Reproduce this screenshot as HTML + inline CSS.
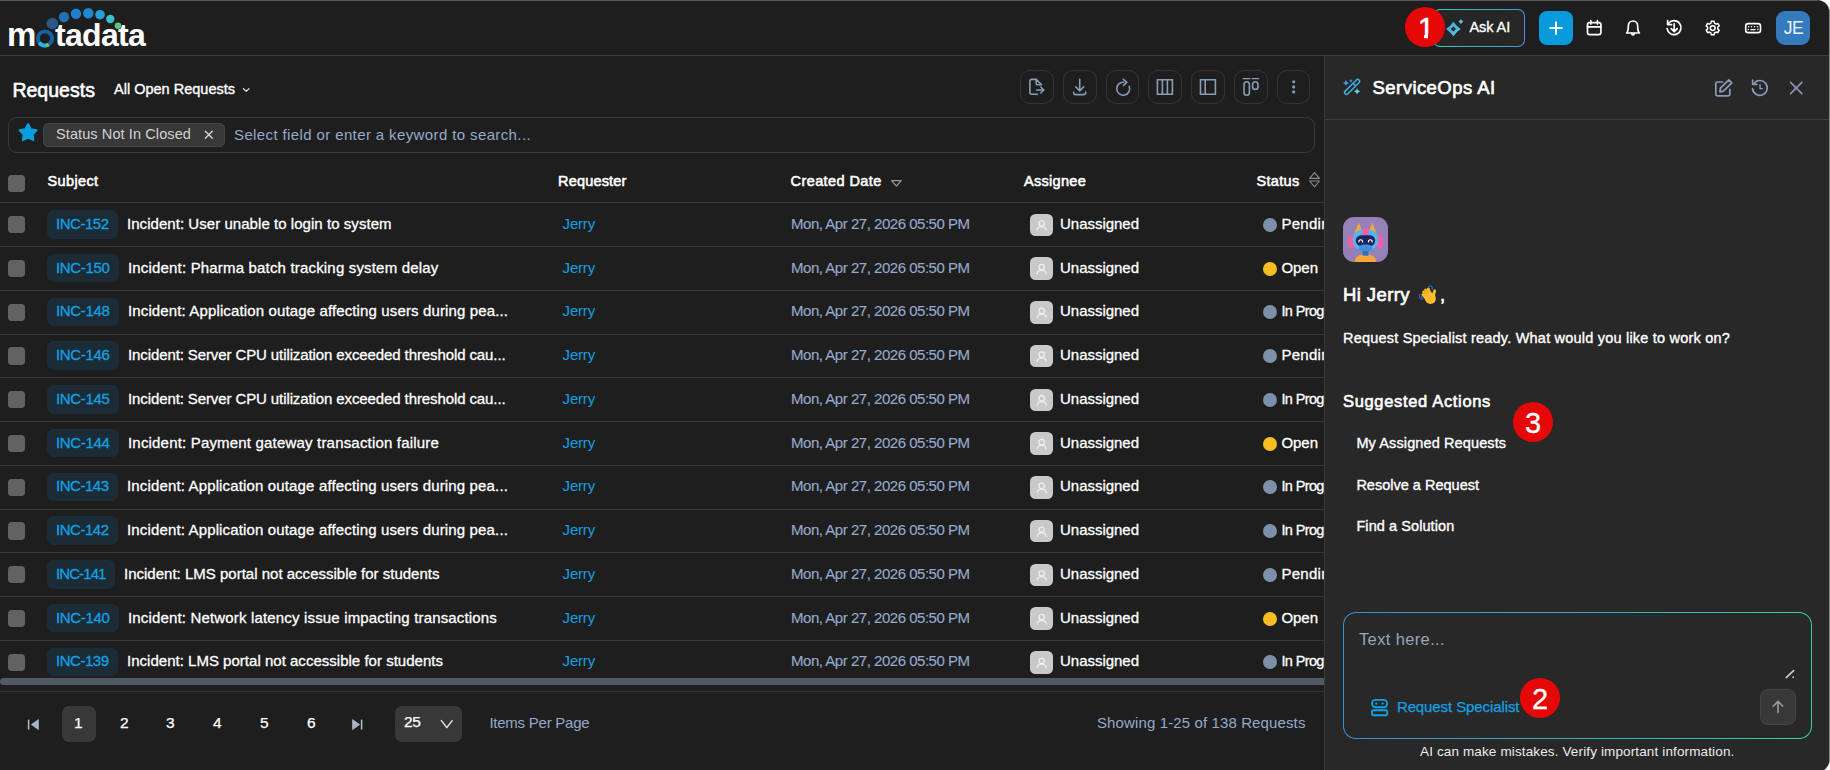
<!DOCTYPE html>
<html lang="en">
<head>
<meta charset="utf-8">
<title>Requests - ServiceOps</title>
<style>
html,body{margin:0;padding:0;background:#fff;}
body{width:1830px;height:770px;overflow:hidden;font-family:"Liberation Sans",sans-serif;}
#frame{position:absolute;left:0;top:0;width:1830px;height:771.5px;background:#8a8a8a;border-radius:0 12.5px 12.5px 0;overflow:hidden;}
#app{position:absolute;left:0;top:0;width:1829px;height:771.5px;background:#1e1e1e;overflow:hidden;border-radius:0 12px 12px 0;}
.b{position:absolute;box-sizing:border-box;}
.t{position:absolute;white-space:pre;line-height:20px;color:#fff;font-family:"Liberation Sans",sans-serif;}
.ann{z-index:30;}
svg{position:absolute;overflow:visible;}
.ic{fill:none;stroke:#fff;stroke-width:1.6;stroke-linecap:round;stroke-linejoin:round;}
.tb{fill:none;stroke:#8a9bb8;stroke-width:1.6;stroke-linecap:round;stroke-linejoin:round;}
#tablewrap{position:absolute;left:0;top:0;width:1324px;height:770px;overflow:hidden;}
</style>
</head>
<body>
<div id="frame">
<div id="app">
<!-- top edge line -->
<div class="b" style="left:0;top:0;width:1818px;height:1px;background:#575757"></div>
<!-- header bottom border -->
<div class="b" style="left:0;top:55px;width:1829px;height:1px;background:#3a3a3a"></div>

<!-- right panel background -->
<div class="b" style="left:1324px;top:56px;width:505px;height:716px;background:#282828"></div>
<div class="b" style="left:1324px;top:56px;width:1px;height:716px;background:#393939"></div>
<div class="b" style="left:1325px;top:119px;width:504px;height:1px;background:#3e3e3e"></div>

<div id="tablewrap">
<div class="b" style="left:8.2px;top:174.5px;width:17.3px;height:17.3px;background:#626262;border-radius:3.8px"></div>
<div class="b" style="left:0px;top:202px;width:1324px;height:1px;background:#383838"></div>
<div class="b" style="left:8.2px;top:216.2px;width:17.3px;height:17.3px;background:#626262;border-radius:3.8px"></div>
<div class="b" style="left:47px;top:210.0px;width:71px;height:28.6px;background:#1b2c36;border-radius:6.5px"></div>
<div class="b" style="left:1030px;top:213.7px;width:23px;height:22.5px;background:#c9c9c9;border-radius:5.5px"></div>
<div class="b" style="left:1262.8px;top:217.79999999999998px;width:14.2px;height:14.2px;background:#7d8fa9;border-radius:50%"></div>
<div class="b" style="left:0px;top:246.0px;width:1324px;height:1px;background:#383838"></div>
<div class="b" style="left:8.2px;top:259.95px;width:17.3px;height:17.3px;background:#626262;border-radius:3.8px"></div>
<div class="b" style="left:47px;top:253.75px;width:72px;height:28.6px;background:#1b2c36;border-radius:6.5px"></div>
<div class="b" style="left:1030px;top:257.45px;width:23px;height:22.5px;background:#c9c9c9;border-radius:5.5px"></div>
<div class="b" style="left:1262.8px;top:261.55px;width:14.2px;height:14.2px;background:#f5bd1f;border-radius:50%"></div>
<div class="b" style="left:0px;top:289.5px;width:1324px;height:1px;background:#383838"></div>
<div class="b" style="left:8.2px;top:303.70000000000005px;width:17.3px;height:17.3px;background:#626262;border-radius:3.8px"></div>
<div class="b" style="left:47px;top:297.5px;width:72px;height:28.6px;background:#1b2c36;border-radius:6.5px"></div>
<div class="b" style="left:1030px;top:301.20000000000005px;width:23px;height:22.5px;background:#c9c9c9;border-radius:5.5px"></div>
<div class="b" style="left:1262.8px;top:305.3px;width:14.2px;height:14.2px;background:#7d8fa9;border-radius:50%"></div>
<div class="b" style="left:0px;top:333.5px;width:1324px;height:1px;background:#383838"></div>
<div class="b" style="left:8.2px;top:347.45000000000005px;width:17.3px;height:17.3px;background:#626262;border-radius:3.8px"></div>
<div class="b" style="left:47px;top:341.25px;width:72px;height:28.6px;background:#1b2c36;border-radius:6.5px"></div>
<div class="b" style="left:1030px;top:344.95000000000005px;width:23px;height:22.5px;background:#c9c9c9;border-radius:5.5px"></div>
<div class="b" style="left:1262.8px;top:349.05px;width:14.2px;height:14.2px;background:#7d8fa9;border-radius:50%"></div>
<div class="b" style="left:0px;top:377.0px;width:1324px;height:1px;background:#383838"></div>
<div class="b" style="left:8.2px;top:391.20000000000005px;width:17.3px;height:17.3px;background:#626262;border-radius:3.8px"></div>
<div class="b" style="left:47px;top:385.0px;width:72px;height:28.6px;background:#1b2c36;border-radius:6.5px"></div>
<div class="b" style="left:1030px;top:388.70000000000005px;width:23px;height:22.5px;background:#c9c9c9;border-radius:5.5px"></div>
<div class="b" style="left:1262.8px;top:392.8px;width:14.2px;height:14.2px;background:#7d8fa9;border-radius:50%"></div>
<div class="b" style="left:0px;top:421.0px;width:1324px;height:1px;background:#383838"></div>
<div class="b" style="left:8.2px;top:434.95000000000005px;width:17.3px;height:17.3px;background:#626262;border-radius:3.8px"></div>
<div class="b" style="left:47px;top:428.75px;width:72px;height:28.6px;background:#1b2c36;border-radius:6.5px"></div>
<div class="b" style="left:1030px;top:432.45000000000005px;width:23px;height:22.5px;background:#c9c9c9;border-radius:5.5px"></div>
<div class="b" style="left:1262.8px;top:436.55px;width:14.2px;height:14.2px;background:#f5bd1f;border-radius:50%"></div>
<div class="b" style="left:0px;top:464.5px;width:1324px;height:1px;background:#383838"></div>
<div class="b" style="left:8.2px;top:478.70000000000005px;width:17.3px;height:17.3px;background:#626262;border-radius:3.8px"></div>
<div class="b" style="left:47px;top:472.5px;width:71px;height:28.6px;background:#1b2c36;border-radius:6.5px"></div>
<div class="b" style="left:1030px;top:476.20000000000005px;width:23px;height:22.5px;background:#c9c9c9;border-radius:5.5px"></div>
<div class="b" style="left:1262.8px;top:480.3px;width:14.2px;height:14.2px;background:#7d8fa9;border-radius:50%"></div>
<div class="b" style="left:0px;top:508.5px;width:1324px;height:1px;background:#383838"></div>
<div class="b" style="left:8.2px;top:522.45px;width:17.3px;height:17.3px;background:#626262;border-radius:3.8px"></div>
<div class="b" style="left:47px;top:516.25px;width:71px;height:28.6px;background:#1b2c36;border-radius:6.5px"></div>
<div class="b" style="left:1030px;top:519.95px;width:23px;height:22.5px;background:#c9c9c9;border-radius:5.5px"></div>
<div class="b" style="left:1262.8px;top:524.0500000000001px;width:14.2px;height:14.2px;background:#7d8fa9;border-radius:50%"></div>
<div class="b" style="left:0px;top:552.0px;width:1324px;height:1px;background:#383838"></div>
<div class="b" style="left:8.2px;top:566.2px;width:17.3px;height:17.3px;background:#626262;border-radius:3.8px"></div>
<div class="b" style="left:47px;top:560.0px;width:68px;height:28.6px;background:#1b2c36;border-radius:6.5px"></div>
<div class="b" style="left:1030px;top:563.7px;width:23px;height:22.5px;background:#c9c9c9;border-radius:5.5px"></div>
<div class="b" style="left:1262.8px;top:567.8000000000001px;width:14.2px;height:14.2px;background:#7d8fa9;border-radius:50%"></div>
<div class="b" style="left:0px;top:596.0px;width:1324px;height:1px;background:#383838"></div>
<div class="b" style="left:8.2px;top:609.95px;width:17.3px;height:17.3px;background:#626262;border-radius:3.8px"></div>
<div class="b" style="left:47px;top:603.75px;width:72px;height:28.6px;background:#1b2c36;border-radius:6.5px"></div>
<div class="b" style="left:1030px;top:607.45px;width:23px;height:22.5px;background:#c9c9c9;border-radius:5.5px"></div>
<div class="b" style="left:1262.8px;top:611.5500000000001px;width:14.2px;height:14.2px;background:#f5bd1f;border-radius:50%"></div>
<div class="b" style="left:0px;top:639.5px;width:1324px;height:1px;background:#383838"></div>
<div class="b" style="left:8.2px;top:653.7px;width:17.3px;height:17.3px;background:#626262;border-radius:3.8px"></div>
<div class="b" style="left:47px;top:647.5px;width:71px;height:28.6px;background:#1b2c36;border-radius:6.5px"></div>
<div class="b" style="left:1030px;top:651.2px;width:23px;height:22.5px;background:#c9c9c9;border-radius:5.5px"></div>
<div class="b" style="left:1262.8px;top:655.3000000000001px;width:14.2px;height:14.2px;background:#7d8fa9;border-radius:50%"></div>
<span class="t" style="left:1281.4px;top:213.7px;font-size:15px;-webkit-text-stroke:0.3px #fff;letter-spacing:0.3px;">Pending</span>
<span class="t" style="left:1281.4px;top:257.5px;font-size:15px;letter-spacing:-0.026px;-webkit-text-stroke:0.3px #fff;">Open</span>
<span class="t" style="left:1281.4px;top:301.4px;font-size:14.5px;-webkit-text-stroke:0.3px #fff;letter-spacing:-0.62px;">In Progress</span>
<span class="t" style="left:1281.4px;top:345.0px;font-size:15px;-webkit-text-stroke:0.3px #fff;letter-spacing:0.3px;">Pending</span>
<span class="t" style="left:1281.4px;top:388.9px;font-size:14.5px;-webkit-text-stroke:0.3px #fff;letter-spacing:-0.62px;">In Progress</span>
<span class="t" style="left:1281.4px;top:432.5px;font-size:15px;letter-spacing:-0.026px;-webkit-text-stroke:0.3px #fff;">Open</span>
<span class="t" style="left:1281.4px;top:476.4px;font-size:14.5px;-webkit-text-stroke:0.3px #fff;letter-spacing:-0.62px;">In Progress</span>
<span class="t" style="left:1281.4px;top:520.1px;font-size:14.5px;-webkit-text-stroke:0.3px #fff;letter-spacing:-0.62px;">In Progress</span>
<span class="t" style="left:1281.4px;top:563.7px;font-size:15px;-webkit-text-stroke:0.3px #fff;letter-spacing:0.3px;">Pending</span>
<span class="t" style="left:1281.4px;top:607.5px;font-size:15px;letter-spacing:-0.026px;-webkit-text-stroke:0.3px #fff;">Open</span>
<span class="t" style="left:1281.4px;top:651.4px;font-size:14.5px;-webkit-text-stroke:0.3px #fff;letter-spacing:-0.62px;">In Progress</span>
<!-- search bar -->
<div class="b" style="left:8px;top:117px;width:1307px;height:36px;border:1px solid #3a3a3a;border-radius:9px"></div>
<div class="b" style="left:43px;top:123px;width:182px;height:24px;background:#383838;border:1px solid #444;border-radius:5px"></div>
<!-- scrollbar -->
<div class="b" style="left:0;top:678px;width:1324px;height:7px;background:#515964;border-radius:4px 0 0 4px"></div>
<div class="b" style="left:0;top:691px;width:1324px;height:1px;background:#363636"></div>
<!-- pagination boxes -->
<div class="b" style="left:62px;top:706px;width:34px;height:35.6px;background:#383838;border-radius:7px"></div>
<div class="b" style="left:395px;top:706px;width:67px;height:35.6px;background:#383838;border-radius:7px"></div>
</div>

<!-- toolbar buttons -->
<div class="b" style="left:1019.9px;top:69.9px;width:33.7px;height:34px;border:1px solid #353535;border-radius:10px"></div>
<div class="b" style="left:1062.9px;top:69.9px;width:33.7px;height:34px;border:1px solid #353535;border-radius:10px"></div>
<div class="b" style="left:1105.9px;top:69.9px;width:33.2px;height:34px;border:1px solid #353535;border-radius:10px"></div>
<div class="b" style="left:1147.9px;top:69.9px;width:33.9px;height:34px;border:1px solid #353535;border-radius:10px"></div>
<div class="b" style="left:1191px;top:69.9px;width:34px;height:34px;border:1px solid #353535;border-radius:10px"></div>
<div class="b" style="left:1233.8px;top:69.9px;width:34.1px;height:34px;border:1px solid #353535;border-radius:10px"></div>
<div class="b" style="left:1277px;top:69.9px;width:32.6px;height:34px;border:1px solid #353535;border-radius:10px"></div>

<!-- ask ai button -->
<div class="b" style="left:1433px;top:9px;width:92px;height:37.6px;border-radius:7px;background:linear-gradient(90deg,#2dd4b0,#4a90d9);"></div>
<div class="b" style="left:1434px;top:10px;width:90px;height:35.6px;border-radius:6px;background:#262626;"></div>
<!-- plus -->
<div class="b" style="left:1539px;top:11px;width:34px;height:34px;border-radius:8px;background:#0a9bdc"></div>
<!-- avatar -->
<div class="b" style="left:1776px;top:11px;width:34px;height:34px;border-radius:9px;background:#357abd"></div>

<!-- annotation circles -->
<div class="b" style="left:1405px;top:7px;width:40px;height:40px;border-radius:50%;background:#e60808;z-index:20"></div>
<div class="b" style="left:1513px;top:402px;width:40px;height:40px;border-radius:50%;background:#e60808;z-index:20"></div>
<div class="b" style="left:1520px;top:678px;width:40px;height:40px;border-radius:50%;background:#e60808;z-index:20"></div>

<div class="b" style="left:1416px;top:34.2px;width:8.4px;height:5.4px;background:#e60808;z-index:31"></div>
<div class="b" style="left:1428.3px;top:34.2px;width:7px;height:5.4px;background:#e60808;z-index:31"></div>
<!-- input box -->
<div class="b" style="left:1343px;top:612px;width:469px;height:127px;border-radius:13px;background:linear-gradient(90deg,#3a8fd8,#2dd4a8);"></div>
<div class="b" style="left:1344px;top:613px;width:467px;height:125px;border-radius:12px;background:#282828;"></div>
<div class="b" style="left:1760.3px;top:689px;width:35.5px;height:35.6px;border-radius:8px;background:#383838;border:1px solid #454545"></div>

<!-- bot avatar -->
<div class="b" style="left:1343px;top:217px;width:45px;height:45px;border-radius:11px;background:#9580b8;overflow:hidden"></div>

<svg width="1829" height="770" viewBox="0 0 1829 770" style="left:0;top:0;z-index:5">
<defs><linearGradient id="g1" x1="0" y1="0" x2="1" y2="1"><stop offset="0" stop-color="#4a9bdc"/><stop offset="1" stop-color="#4fd0dc"/></linearGradient><linearGradient id="g2" x1="0" y1="0" x2="1" y2="1"><stop offset="0" stop-color="#3d96e2"/><stop offset="1" stop-color="#52d6e2"/></linearGradient><radialGradient id="gd" cx="0.5" cy="0.5" r="0.6"><stop offset="0" stop-color="#2f5f92"/><stop offset="1" stop-color="#2a517c"/></radialGradient></defs>
<circle cx="52.3" cy="23.5" r="5.8" fill="#2c5685"/>
<circle cx="64" cy="17" r="5.2" fill="#2170b2"/>
<circle cx="76" cy="13.7" r="5.2" fill="#1f80c8"/>
<circle cx="88.3" cy="13.3" r="5.2" fill="#2088d2"/>
<circle cx="100" cy="14.7" r="4.8" fill="#25a0d8"/>
<circle cx="110.3" cy="19" r="4.2" fill="#3bbdd0"/>
<circle cx="118" cy="25.7" r="3.3" fill="#5cc575"/>
<circle cx="45" cy="38.4" r="7.1" fill="none" stroke="#0f64a4" stroke-width="3.8"/>
<path d="M39.2,42.6 A7.1,7.1 0 0 0 46.5,45.4" fill="none" stroke="#22b4e6" stroke-width="3.8"/>
<path d="M46.3,45.4 A7.1,7.1 0 0 0 48.6,44.5" fill="none" stroke="#7ccb5a" stroke-width="3.8"/>
<path d="M1453.40,21.70 Q1456.32,26.08 1460.70,29.00 Q1456.32,31.92 1453.40,36.30 Q1450.48,31.92 1446.10,29.00 Q1450.48,26.08 1453.40,21.70Z M1453.4,26.4 L1456,29 L1453.4,31.6 L1450.8,29Z" fill="url(#g1)" fill-rule="evenodd"/>
<path d="M1460.9,19.2 L1463.3,21.6 L1460.9,24 L1458.5,21.6Z" fill="#4cc4dc"/>
<path d="M1556,21.4 V34.8 M1549.3,28.1 H1562.7" stroke="#fff" stroke-width="2" stroke-linecap="butt"/>
<g class="ic" style="stroke-width:1.7"><rect x="1587.5" y="22.6" width="13.4" height="12" rx="2"/><path d="M1590.8,20.6 V24 M1597.4,20.6 V24 M1587.5,26.9 H1600.9"/></g>
<g class="ic" style="stroke-width:1.7"><path d="M1626.6,33 H1639.4 C1638,31.6 1637.7,30 1637.7,26.2 C1637.7,23 1635.6,21 1633,21 C1630.4,21 1628.3,23 1628.3,26.2 C1628.3,30 1628,31.6 1626.6,33Z"/><path d="M1631.6,33.4 C1631.8,34.6 1632.4,35 1633,35 C1633.6,35 1634.2,34.6 1634.4,33.4"/></g>
<g class="ic" style="stroke-width:1.7"><path d="M1668.6,23.2 A7,7 0 1 1 1667.1,28.6"/><path d="M1667.6,20.6 V24.6 H1671.6"/><path d="M1674.2,23.8 V31.4 M1671.2,28.6 L1674.2,31.6 L1677.2,28.6"/></g>
<g class="ic" style="stroke-width:1.5"><path d="M1710.99,23.19 L1711.27,21.35 L1714.13,21.35 L1714.41,23.19 L1716.10,24.16 L1717.83,23.48 L1719.26,25.97 L1717.81,27.13 L1717.81,29.07 L1719.26,30.23 L1717.83,32.72 L1716.10,32.04 L1714.41,33.01 L1714.13,34.85 L1711.27,34.85 L1710.99,33.01 L1709.30,32.04 L1707.57,32.72 L1706.14,30.23 L1707.59,29.07 L1707.59,27.13 L1706.14,25.97 L1707.57,23.48 L1709.30,24.16Z" stroke-linejoin="round"/><circle cx="1712.7" cy="28.1" r="2.4"/></g>
<g class="ic" style="stroke-width:1.6"><rect x="1745.7" y="23.6" width="14.8" height="9" rx="2.4"/></g>
<g fill="#fff"><circle cx="1748.6" cy="26.7" r="0.75"/><circle cx="1751.5" cy="26.7" r="0.75"/><circle cx="1754.5" cy="26.7" r="0.75"/><circle cx="1757.5" cy="26.7" r="0.75"/><circle cx="1748.3" cy="29.6" r="0.75"/><circle cx="1757.9" cy="29.6" r="0.75"/><rect x="1750.3" y="28.9" width="5.4" height="1.4" rx="0.7"/></g>
<path d="M243.4,88.6 L246.2,91.4 L249,88.6" fill="none" stroke="#e8e8e8" stroke-width="1.3" stroke-linecap="round" stroke-linejoin="round"/>
<path d="M28.10,124.10 L30.86,129.20 L36.56,130.25 L32.57,134.45 L33.33,140.20 L28.10,137.70 L22.87,140.20 L23.63,134.45 L19.64,130.25 L25.34,129.20Z" fill="#089fde" stroke="#089fde" stroke-width="2" stroke-linejoin="round"/>
<path d="M205.3,131.3 L212.3,138.3 M212.3,131.3 L205.3,138.3" stroke="#d8d8d8" stroke-width="1.3" stroke-linecap="round"/>
<path d="M891.6,180.6 H901.2 L896.4,186.2Z" fill="none" stroke="#9a9a9a" stroke-width="1.2" stroke-linejoin="round"/>
<path d="M1309.6,178.4 H1319.4 L1314.5,172.6Z M1309.6,181 H1319.4 L1314.5,186.8Z" fill="none" stroke="#8c8c8c" stroke-width="1.1" stroke-linejoin="round"/>
<g class="tb">
<path d="M1036.2,79.4 H1031.6 Q1029.9,79.4 1029.9,81.1 V92.6 Q1029.9,94.3 1031.6,94.3 H1037.5"/>
<path d="M1036.2,79.4 L1041.6,84.8 H1037.4 Q1036.2,84.8 1036.2,83.6 Z" />
<path d="M1036.6,90 H1043.6 M1040.8,87 L1043.8,90 L1040.8,93"/>
<path d="M1079.7,79.4 V90.6 M1075.6,86.8 L1079.7,90.9 L1083.8,86.8"/>
<path d="M1073.7,92 V93 Q1073.7,94.6 1075.3,94.6 H1084.1 Q1085.7,94.6 1085.7,93 V92"/>
<path d="M1129.3,86.4 A6.5,6.5 0 1 1 1123.6,82.2"/>
<path d="M1123.4,79.4 L1126.8,82.4 L1123.6,85.4"/>
<path d="M1157.4,79.7 H1172.4 V94.3 H1157.4Z M1162.4,79.7 V94.3 M1167.4,79.7 V94.3" stroke-linejoin="miter"/>
<path d="M1200.5,79.7 H1215.4 V94.3 H1200.5Z M1205.2,79.7 V94.3" stroke-linejoin="miter"/>
<path d="M1243.2,78.6 H1249.8 M1252,78.6 H1258.6" stroke-width="1.3"/>
<rect x="1244" y="81.8" width="5.4" height="13.4" rx="2.7"/>
<rect x="1252.6" y="81.8" width="5.4" height="7.6" rx="2.7"/>
</g>
<g fill="#8a9bb8"><circle cx="1293.7" cy="81.8" r="1.55"/><circle cx="1293.7" cy="86.9" r="1.55"/><circle cx="1293.7" cy="91.9" r="1.55"/></g>
<g fill="none" stroke="url(#g2)" stroke-width="1.5" transform="rotate(-45 1352.1 86.9)"><rect x="1342.3" y="85" width="19.6" height="3.8" rx="1.9" stroke="#41aee2"/><path d="M1355.3,85 V88.8" stroke="#41aee2"/></g>
<path d="M1346.00,80.10 Q1346.60,82.50 1349.00,83.10 Q1346.60,83.70 1346.00,86.10 Q1345.40,83.70 1343.00,83.10 Q1345.40,82.50 1346.00,80.10Z" fill="#3d9be2"/>
<path d="M1350.90,78.90 Q1351.28,80.42 1352.80,80.80 Q1351.28,81.18 1350.90,82.70 Q1350.52,81.18 1349.00,80.80 Q1350.52,80.42 1350.90,78.90Z" fill="#3d9be2"/>
<path d="M1357.10,88.30 Q1357.72,90.78 1360.20,91.40 Q1357.72,92.02 1357.10,94.50 Q1356.48,92.02 1354.00,91.40 Q1356.48,90.78 1357.10,88.30Z" fill="#4fd4e0"/>
<g class="tb" style="stroke-width:1.7"><path d="M1722.5,82 H1717.4 Q1715.8,82 1715.8,83.6 V94.2 Q1715.8,95.8 1717.4,95.8 H1728.2 Q1729.8,95.8 1729.8,94.2 V89.4"/><path d="M1728.8,79.8 L1731.8,82.8 L1723.4,91.2 L1719.9,91.8 L1720.4,88.2 Z"/></g>
<g class="tb" style="stroke-width:1.6"><path d="M1753.6,84 A7.4,7.4 0 1 1 1752.5,88.6"/><path d="M1752.6,80 V84.4 H1757"/><path d="M1760,84.6 V88.6 H1762.4" stroke-width="1.4"/></g>
<path d="M1790.6,82.4 L1801.8,93.6 M1801.8,82.4 L1790.6,93.6" stroke="#8a9bb8" stroke-width="1.5" stroke-linecap="round"/>
<g fill="none" stroke="#f2f2f2" stroke-width="1.15" stroke-linecap="round"><circle cx="1041.7" cy="223.40" r="2.7"/><path d="M1037.2,230.20 C1037.2,227.50 1039.1,226.70 1041.7,226.70 C1044.3,226.70 1046.2,227.50 1046.2,230.20"/></g>
<g fill="none" stroke="#f2f2f2" stroke-width="1.15" stroke-linecap="round"><circle cx="1041.7" cy="267.15" r="2.7"/><path d="M1037.2,273.95 C1037.2,271.25 1039.1,270.45 1041.7,270.45 C1044.3,270.45 1046.2,271.25 1046.2,273.95"/></g>
<g fill="none" stroke="#f2f2f2" stroke-width="1.15" stroke-linecap="round"><circle cx="1041.7" cy="310.90" r="2.7"/><path d="M1037.2,317.70 C1037.2,315.00 1039.1,314.20 1041.7,314.20 C1044.3,314.20 1046.2,315.00 1046.2,317.70"/></g>
<g fill="none" stroke="#f2f2f2" stroke-width="1.15" stroke-linecap="round"><circle cx="1041.7" cy="354.65" r="2.7"/><path d="M1037.2,361.45 C1037.2,358.75 1039.1,357.95 1041.7,357.95 C1044.3,357.95 1046.2,358.75 1046.2,361.45"/></g>
<g fill="none" stroke="#f2f2f2" stroke-width="1.15" stroke-linecap="round"><circle cx="1041.7" cy="398.40" r="2.7"/><path d="M1037.2,405.20 C1037.2,402.50 1039.1,401.70 1041.7,401.70 C1044.3,401.70 1046.2,402.50 1046.2,405.20"/></g>
<g fill="none" stroke="#f2f2f2" stroke-width="1.15" stroke-linecap="round"><circle cx="1041.7" cy="442.15" r="2.7"/><path d="M1037.2,448.95 C1037.2,446.25 1039.1,445.45 1041.7,445.45 C1044.3,445.45 1046.2,446.25 1046.2,448.95"/></g>
<g fill="none" stroke="#f2f2f2" stroke-width="1.15" stroke-linecap="round"><circle cx="1041.7" cy="485.90" r="2.7"/><path d="M1037.2,492.70 C1037.2,490.00 1039.1,489.20 1041.7,489.20 C1044.3,489.20 1046.2,490.00 1046.2,492.70"/></g>
<g fill="none" stroke="#f2f2f2" stroke-width="1.15" stroke-linecap="round"><circle cx="1041.7" cy="529.65" r="2.7"/><path d="M1037.2,536.45 C1037.2,533.75 1039.1,532.95 1041.7,532.95 C1044.3,532.95 1046.2,533.75 1046.2,536.45"/></g>
<g fill="none" stroke="#f2f2f2" stroke-width="1.15" stroke-linecap="round"><circle cx="1041.7" cy="573.40" r="2.7"/><path d="M1037.2,580.20 C1037.2,577.50 1039.1,576.70 1041.7,576.70 C1044.3,576.70 1046.2,577.50 1046.2,580.20"/></g>
<g fill="none" stroke="#f2f2f2" stroke-width="1.15" stroke-linecap="round"><circle cx="1041.7" cy="617.15" r="2.7"/><path d="M1037.2,623.95 C1037.2,621.25 1039.1,620.45 1041.7,620.45 C1044.3,620.45 1046.2,621.25 1046.2,623.95"/></g>
<g fill="none" stroke="#f2f2f2" stroke-width="1.15" stroke-linecap="round"><circle cx="1041.7" cy="660.90" r="2.7"/><path d="M1037.2,667.70 C1037.2,665.00 1039.1,664.20 1041.7,664.20 C1044.3,664.20 1046.2,665.00 1046.2,667.70"/></g>
<g fill="#aab4c4" stroke="#aab4c4" stroke-linejoin="round"><path d="M38.4,719.6 L31.4,724.6 L38.4,729.6Z" stroke-width="0.8"/><path d="M28.6,719.6 V729.6" stroke-width="1.6" fill="none"/></g>
<g fill="#aab4c4" stroke="#aab4c4" stroke-linejoin="round"><path d="M352.6,719.6 L359.6,724.6 L352.6,729.6Z" stroke-width="0.8"/><path d="M361.6,719.6 V729.6" stroke-width="1.6" fill="none"/></g>
<path d="M441.4,720.6 L446.8,727.6 L452.2,720.6" fill="none" stroke="#e8e8e8" stroke-width="1.4" stroke-linecap="round" stroke-linejoin="round"/>
<g fill="none" stroke="#0fa2e6" stroke-width="1.9"><rect x="1372" y="699.9" width="15.2" height="7.4" rx="3.7"/><rect x="1372" y="710.2" width="15.2" height="5" rx="1.2"/></g>
<g fill="#0fa2e6"><circle cx="1376.3" cy="703.6" r="1.1"/><circle cx="1382.7" cy="703.6" r="1.1"/></g>
<path d="M1778,712.6 V701.6 M1773.2,706.2 L1778,701.4 L1782.8,706.2" fill="none" stroke="#9a9a9a" stroke-width="1.6" stroke-linecap="round" stroke-linejoin="round"/>
<path d="M1786.2,677.6 L1793.6,670.6" stroke="#d0d0d0" stroke-width="1.6" stroke-linecap="round"/><circle cx="1793.2" cy="677.2" r="0.9" fill="#d0d0d0"/>
<g transform="translate(1343,217)">
<path d="M12,45 C12,40 15,37.4 22.5,37.4 C30,37.4 33,40 33,45Z" fill="#f6a63a"/>
<rect x="19.6" y="32" width="5.8" height="6.6" fill="#2f6fc0"/>
<path d="M11.4,17 C12.6,13 14.4,9 15.8,5.8 C17.2,9 18.2,12 18.8,14.4Z" fill="#f6a63a"/><path d="M33.6,17 C32.4,13 30.6,9 29.2,5.8 C27.8,9 26.8,12 26.2,14.4Z" fill="#f6a63a"/>
<ellipse cx="8.4" cy="24.8" rx="3.8" ry="6.8" fill="#ef5fa7"/><ellipse cx="36.6" cy="24.8" rx="3.8" ry="6.8" fill="#ef5fa7"/>
<rect x="9.8" y="12.4" width="25.4" height="20.8" rx="9.6" fill="#55b6ea"/>
<path d="M19.2,12.8 L22.5,10.6 L25.8,12.8 L25.8,18.6 L19.2,18.6Z" fill="#ef5fa7"/>
<rect x="12.8" y="18.2" width="19.4" height="10.8" rx="5.4" fill="#1c2560"/>
<path d="M15.8,32.8 C15.8,28.8 18,27.6 22.5,27.6 C27,27.6 29.2,28.8 29.2,32.8 C27,34.6 18,34.6 15.8,32.8Z" fill="#3f8fdc"/>
<path d="M15.8,25 A1.9,2.2 0 0 1 19.6,25 M25.4,25 A1.9,2.2 0 0 1 29.2,25" fill="none" stroke="#fff" stroke-width="1.1" stroke-linecap="round"/>
</g>
<g transform="translate(1418,284)">
<g stroke="#fbbd2e" stroke-linecap="round" fill="none"><path d="M12.6,10.4 L10.3,5" stroke-width="2.7"/><path d="M10.6,11.2 L7.5,5.8" stroke-width="2.7"/><path d="M8.9,12.6 L5.5,7.8" stroke-width="2.6"/><path d="M7.9,14.6 L4.6,10.6" stroke-width="2.4"/><path d="M15.2,12 L16.7,6.8" stroke-width="2.9"/></g>
<ellipse cx="12.3" cy="14.2" rx="5.5" ry="5.9" transform="rotate(-24 12.3 14.2)" fill="#fbbd2e"/>
<path d="M9.2,6.6 L10.4,9.4 M6.8,8 L8.4,10.6" stroke="#f19a1a" stroke-width="0.7" stroke-linecap="round" fill="none"/>
<g fill="none" stroke="#1f6fb5" stroke-width="1.1" stroke-linecap="round"><path d="M10.6,2.6 Q13.2,1.2 14.4,3.6"/><path d="M13.2,4.2 Q14.8,4 15,6"/><path d="M1.6,10.4 Q0.6,13.8 3.8,15.4"/><path d="M3.4,12.4 Q3.4,14.4 5.2,14.8"/></g>
</g>
</svg>

<span class="t" style="left:6.9px;top:25.1px;font-size:33px;font-weight:700;">m</span>
<span class="t" style="left:55.0px;top:25.4px;font-size:32px;font-weight:700;letter-spacing:-0.708px;">tadata</span>
<span class="t" style="left:1469.4px;top:17.2px;font-size:14.5px;letter-spacing:-0.052px;-webkit-text-stroke:0.35px #fff;">Ask AI</span>
<span class="t" style="left:1783.8px;top:18.0px;font-size:17.5px;color:#eef4fb;letter-spacing:-0.619px;">JE</span>
<span class="t" style="left:12.4px;top:79.6px;font-size:19.5px;letter-spacing:0.026px;-webkit-text-stroke:0.6px #fff;">Requests</span>
<span class="t" style="left:114.0px;top:79.4px;font-size:14.5px;letter-spacing:0.006px;-webkit-text-stroke:0.35px #fff;">All Open Requests</span>
<span class="t" style="left:56.0px;top:124.0px;font-size:14.5px;color:#d2d2d2;letter-spacing:0.100px;">Status Not In Closed</span>
<span class="t" style="left:234.0px;top:124.8px;font-size:15px;color:#96a9ca;letter-spacing:0.383px;">Select field or enter a keyword to search...</span>
<span class="t" style="left:47.5px;top:171.0px;font-size:14.5px;letter-spacing:0.375px;-webkit-text-stroke:0.55px #fff;">Subject</span>
<span class="t" style="left:558.0px;top:171.0px;font-size:14.5px;letter-spacing:0.188px;-webkit-text-stroke:0.55px #fff;">Requester</span>
<span class="t" style="left:790.6px;top:171.0px;font-size:14.5px;letter-spacing:0.396px;-webkit-text-stroke:0.55px #fff;">Created Date</span>
<span class="t" style="left:1024.0px;top:171.0px;font-size:14.5px;letter-spacing:0.293px;-webkit-text-stroke:0.55px #fff;">Assignee</span>
<span class="t" style="left:1256.5px;top:171.0px;font-size:14.5px;letter-spacing:0.315px;-webkit-text-stroke:0.55px #fff;">Status</span>
<span class="t" style="left:56.0px;top:213.7px;font-size:15px;color:#12a0e2;letter-spacing:-0.480px;-webkit-text-stroke:0.3px #12a0e2;">INC-152</span>
<span class="t" style="left:127.0px;top:213.7px;font-size:15px;letter-spacing:0.049px;-webkit-text-stroke:0.3px #fff;">Incident: User unable to login to system</span>
<span class="t" style="left:562.6px;top:213.7px;font-size:15px;color:#12a0e2;letter-spacing:-0.189px;">Jerry</span>
<span class="t" style="left:791.0px;top:213.7px;font-size:15px;color:#96a9ca;letter-spacing:-0.476px;-webkit-text-stroke:0.15px #96a9ca;">Mon, Apr 27, 2026 05:50 PM</span>
<span class="t" style="left:1060.0px;top:213.7px;font-size:15px;letter-spacing:-0.022px;-webkit-text-stroke:0.3px #fff;">Unassigned</span>
<span class="t" style="left:56.0px;top:257.5px;font-size:15px;color:#12a0e2;letter-spacing:-0.337px;-webkit-text-stroke:0.3px #12a0e2;">INC-150</span>
<span class="t" style="left:128.0px;top:257.5px;font-size:15px;letter-spacing:0.176px;-webkit-text-stroke:0.3px #fff;">Incident: Pharma batch tracking system delay</span>
<span class="t" style="left:562.6px;top:257.5px;font-size:15px;color:#12a0e2;letter-spacing:-0.189px;">Jerry</span>
<span class="t" style="left:791.0px;top:257.5px;font-size:15px;color:#96a9ca;letter-spacing:-0.476px;-webkit-text-stroke:0.15px #96a9ca;">Mon, Apr 27, 2026 05:50 PM</span>
<span class="t" style="left:1060.0px;top:257.5px;font-size:15px;letter-spacing:-0.022px;-webkit-text-stroke:0.3px #fff;">Unassigned</span>
<span class="t" style="left:56.0px;top:301.2px;font-size:15px;color:#12a0e2;letter-spacing:-0.337px;-webkit-text-stroke:0.3px #12a0e2;">INC-148</span>
<span class="t" style="left:128.0px;top:301.2px;font-size:15px;letter-spacing:0.130px;-webkit-text-stroke:0.3px #fff;">Incident: Application outage affecting users during pea...</span>
<span class="t" style="left:562.6px;top:301.2px;font-size:15px;color:#12a0e2;letter-spacing:-0.189px;">Jerry</span>
<span class="t" style="left:791.0px;top:301.2px;font-size:15px;color:#96a9ca;letter-spacing:-0.476px;-webkit-text-stroke:0.15px #96a9ca;">Mon, Apr 27, 2026 05:50 PM</span>
<span class="t" style="left:1060.0px;top:301.2px;font-size:15px;letter-spacing:-0.022px;-webkit-text-stroke:0.3px #fff;">Unassigned</span>
<span class="t" style="left:56.0px;top:345.0px;font-size:15px;color:#12a0e2;letter-spacing:-0.337px;-webkit-text-stroke:0.3px #12a0e2;">INC-146</span>
<span class="t" style="left:128.0px;top:345.0px;font-size:15px;letter-spacing:-0.104px;-webkit-text-stroke:0.3px #fff;">Incident: Server CPU utilization exceeded threshold cau...</span>
<span class="t" style="left:562.6px;top:345.0px;font-size:15px;color:#12a0e2;letter-spacing:-0.189px;">Jerry</span>
<span class="t" style="left:791.0px;top:345.0px;font-size:15px;color:#96a9ca;letter-spacing:-0.476px;-webkit-text-stroke:0.15px #96a9ca;">Mon, Apr 27, 2026 05:50 PM</span>
<span class="t" style="left:1060.0px;top:345.0px;font-size:15px;letter-spacing:-0.022px;-webkit-text-stroke:0.3px #fff;">Unassigned</span>
<span class="t" style="left:56.0px;top:388.7px;font-size:15px;color:#12a0e2;letter-spacing:-0.337px;-webkit-text-stroke:0.3px #12a0e2;">INC-145</span>
<span class="t" style="left:128.0px;top:388.7px;font-size:15px;letter-spacing:-0.104px;-webkit-text-stroke:0.3px #fff;">Incident: Server CPU utilization exceeded threshold cau...</span>
<span class="t" style="left:562.6px;top:388.7px;font-size:15px;color:#12a0e2;letter-spacing:-0.189px;">Jerry</span>
<span class="t" style="left:791.0px;top:388.7px;font-size:15px;color:#96a9ca;letter-spacing:-0.476px;-webkit-text-stroke:0.15px #96a9ca;">Mon, Apr 27, 2026 05:50 PM</span>
<span class="t" style="left:1060.0px;top:388.7px;font-size:15px;letter-spacing:-0.022px;-webkit-text-stroke:0.3px #fff;">Unassigned</span>
<span class="t" style="left:56.0px;top:432.5px;font-size:15px;color:#12a0e2;letter-spacing:-0.337px;-webkit-text-stroke:0.3px #12a0e2;">INC-144</span>
<span class="t" style="left:128.0px;top:432.5px;font-size:15px;letter-spacing:0.185px;-webkit-text-stroke:0.3px #fff;">Incident: Payment gateway transaction failure</span>
<span class="t" style="left:562.6px;top:432.5px;font-size:15px;color:#12a0e2;letter-spacing:-0.189px;">Jerry</span>
<span class="t" style="left:791.0px;top:432.5px;font-size:15px;color:#96a9ca;letter-spacing:-0.476px;-webkit-text-stroke:0.15px #96a9ca;">Mon, Apr 27, 2026 05:50 PM</span>
<span class="t" style="left:1060.0px;top:432.5px;font-size:15px;letter-spacing:-0.022px;-webkit-text-stroke:0.3px #fff;">Unassigned</span>
<span class="t" style="left:56.0px;top:476.2px;font-size:15px;color:#12a0e2;letter-spacing:-0.480px;-webkit-text-stroke:0.3px #12a0e2;">INC-143</span>
<span class="t" style="left:127.0px;top:476.2px;font-size:15px;letter-spacing:0.147px;-webkit-text-stroke:0.3px #fff;">Incident: Application outage affecting users during pea...</span>
<span class="t" style="left:562.6px;top:476.2px;font-size:15px;color:#12a0e2;letter-spacing:-0.189px;">Jerry</span>
<span class="t" style="left:791.0px;top:476.2px;font-size:15px;color:#96a9ca;letter-spacing:-0.476px;-webkit-text-stroke:0.15px #96a9ca;">Mon, Apr 27, 2026 05:50 PM</span>
<span class="t" style="left:1060.0px;top:476.2px;font-size:15px;letter-spacing:-0.022px;-webkit-text-stroke:0.3px #fff;">Unassigned</span>
<span class="t" style="left:56.0px;top:520.0px;font-size:15px;color:#12a0e2;letter-spacing:-0.480px;-webkit-text-stroke:0.3px #12a0e2;">INC-142</span>
<span class="t" style="left:127.0px;top:520.0px;font-size:15px;letter-spacing:0.147px;-webkit-text-stroke:0.3px #fff;">Incident: Application outage affecting users during pea...</span>
<span class="t" style="left:562.6px;top:520.0px;font-size:15px;color:#12a0e2;letter-spacing:-0.189px;">Jerry</span>
<span class="t" style="left:791.0px;top:520.0px;font-size:15px;color:#96a9ca;letter-spacing:-0.476px;-webkit-text-stroke:0.15px #96a9ca;">Mon, Apr 27, 2026 05:50 PM</span>
<span class="t" style="left:1060.0px;top:520.0px;font-size:15px;letter-spacing:-0.022px;-webkit-text-stroke:0.3px #fff;">Unassigned</span>
<span class="t" style="left:56.0px;top:563.7px;font-size:15px;color:#12a0e2;letter-spacing:-0.908px;-webkit-text-stroke:0.3px #12a0e2;">INC-141</span>
<span class="t" style="left:124.0px;top:563.7px;font-size:15px;letter-spacing:0.007px;-webkit-text-stroke:0.3px #fff;">Incident: LMS portal not accessible for students</span>
<span class="t" style="left:562.6px;top:563.7px;font-size:15px;color:#12a0e2;letter-spacing:-0.189px;">Jerry</span>
<span class="t" style="left:791.0px;top:563.7px;font-size:15px;color:#96a9ca;letter-spacing:-0.476px;-webkit-text-stroke:0.15px #96a9ca;">Mon, Apr 27, 2026 05:50 PM</span>
<span class="t" style="left:1060.0px;top:563.7px;font-size:15px;letter-spacing:-0.022px;-webkit-text-stroke:0.3px #fff;">Unassigned</span>
<span class="t" style="left:56.0px;top:607.5px;font-size:15px;color:#12a0e2;letter-spacing:-0.337px;-webkit-text-stroke:0.3px #12a0e2;">INC-140</span>
<span class="t" style="left:128.0px;top:607.5px;font-size:15px;letter-spacing:0.163px;-webkit-text-stroke:0.3px #fff;">Incident: Network latency issue impacting transactions</span>
<span class="t" style="left:562.6px;top:607.5px;font-size:15px;color:#12a0e2;letter-spacing:-0.189px;">Jerry</span>
<span class="t" style="left:791.0px;top:607.5px;font-size:15px;color:#96a9ca;letter-spacing:-0.476px;-webkit-text-stroke:0.15px #96a9ca;">Mon, Apr 27, 2026 05:50 PM</span>
<span class="t" style="left:1060.0px;top:607.5px;font-size:15px;letter-spacing:-0.022px;-webkit-text-stroke:0.3px #fff;">Unassigned</span>
<span class="t" style="left:56.0px;top:651.2px;font-size:15px;color:#12a0e2;letter-spacing:-0.480px;-webkit-text-stroke:0.3px #12a0e2;">INC-139</span>
<span class="t" style="left:127.0px;top:651.2px;font-size:15px;letter-spacing:0.017px;-webkit-text-stroke:0.3px #fff;">Incident: LMS portal not accessible for students</span>
<span class="t" style="left:562.6px;top:651.2px;font-size:15px;color:#12a0e2;letter-spacing:-0.189px;">Jerry</span>
<span class="t" style="left:791.0px;top:651.2px;font-size:15px;color:#96a9ca;letter-spacing:-0.476px;-webkit-text-stroke:0.15px #96a9ca;">Mon, Apr 27, 2026 05:50 PM</span>
<span class="t" style="left:1060.0px;top:651.2px;font-size:15px;letter-spacing:-0.022px;-webkit-text-stroke:0.3px #fff;">Unassigned</span>
<span class="t" style="left:74.1px;top:712.8px;font-size:15.5px;letter-spacing:0.375px;-webkit-text-stroke:0.25px #fff;">1</span>
<span class="t" style="left:120.0px;top:712.8px;font-size:15.5px;letter-spacing:0.375px;-webkit-text-stroke:0.25px #fff;">2</span>
<span class="t" style="left:166.1px;top:712.8px;font-size:15.5px;letter-spacing:0.375px;-webkit-text-stroke:0.25px #fff;">3</span>
<span class="t" style="left:212.9px;top:712.8px;font-size:15.5px;letter-spacing:0.375px;-webkit-text-stroke:0.25px #fff;">4</span>
<span class="t" style="left:259.9px;top:712.8px;font-size:15.5px;letter-spacing:0.375px;-webkit-text-stroke:0.25px #fff;">5</span>
<span class="t" style="left:306.9px;top:712.8px;font-size:15.5px;letter-spacing:0.375px;-webkit-text-stroke:0.25px #fff;">6</span>
<span class="t" style="left:404.0px;top:712.2px;font-size:15.5px;letter-spacing:-0.425px;-webkit-text-stroke:0.25px #fff;">25</span>
<span class="t" style="left:489.4px;top:713.2px;font-size:15px;color:#96a9ca;letter-spacing:-0.242px;">Items Per Page</span>
<span class="t" style="left:1097.0px;top:713.3px;font-size:15px;color:#96a9ca;letter-spacing:0.120px;">Showing 1-25 of 138 Requests</span>
<span class="t" style="left:1372.6px;top:77.6px;font-size:18.5px;letter-spacing:0.437px;-webkit-text-stroke:0.65px #fff;">ServiceOps AI</span>
<span class="t" style="left:1343.0px;top:284.8px;font-size:18.5px;letter-spacing:0.408px;-webkit-text-stroke:0.65px #fff;">Hi Jerry</span>
<span class="t" style="left:1440.0px;top:284.8px;font-size:18.5px;-webkit-text-stroke:0.65px #fff;">,</span>
<span class="t" style="left:1343.0px;top:328.4px;font-size:14.5px;letter-spacing:0.205px;-webkit-text-stroke:0.35px #fff;">Request Specialist ready. What would you like to work on?</span>
<span class="t" style="left:1343.0px;top:391.3px;font-size:16.5px;letter-spacing:0.665px;-webkit-text-stroke:0.6px #fff;">Suggested Actions</span>
<span class="t" style="left:1356.4px;top:433.2px;font-size:14.5px;letter-spacing:0.115px;-webkit-text-stroke:0.35px #fff;">My Assigned Requests</span>
<span class="t" style="left:1356.4px;top:474.7px;font-size:14.5px;letter-spacing:0.005px;-webkit-text-stroke:0.35px #fff;">Resolve a Request</span>
<span class="t" style="left:1356.4px;top:515.7px;font-size:14.5px;letter-spacing:0.078px;-webkit-text-stroke:0.35px #fff;">Find a Solution</span>
<span class="t" style="left:1359.0px;top:629.3px;font-size:16.5px;color:#97a5bb;letter-spacing:0.365px;">Text here...</span>
<span class="t" style="left:1396.9px;top:696.8px;font-size:15px;color:#12a0e2;letter-spacing:-0.096px;-webkit-text-stroke:0.25px #12a0e2;">Request Specialist</span>
<span class="t" style="left:1420.0px;top:741.6px;font-size:13.5px;color:#ececec;letter-spacing:0.133px;">AI can make mistakes. Verify important information.</span>
<span class="t ann" style="left:1418.1px;top:18.0px;font-size:29px;-webkit-text-stroke:0.6px #fff;">1</span>
<span class="t ann" style="left:1525.0px;top:412.6px;font-size:29px;-webkit-text-stroke:0.3px #fff;">3</span>
<span class="t ann" style="left:1532.0px;top:688.6px;font-size:29px;-webkit-text-stroke:0.3px #fff;">2</span>
<span class="t" style="left:1418px;top:284px;font-size:18px;color:transparent">&#x1F44B;</span>
</div>
</div>
</body>
</html>
